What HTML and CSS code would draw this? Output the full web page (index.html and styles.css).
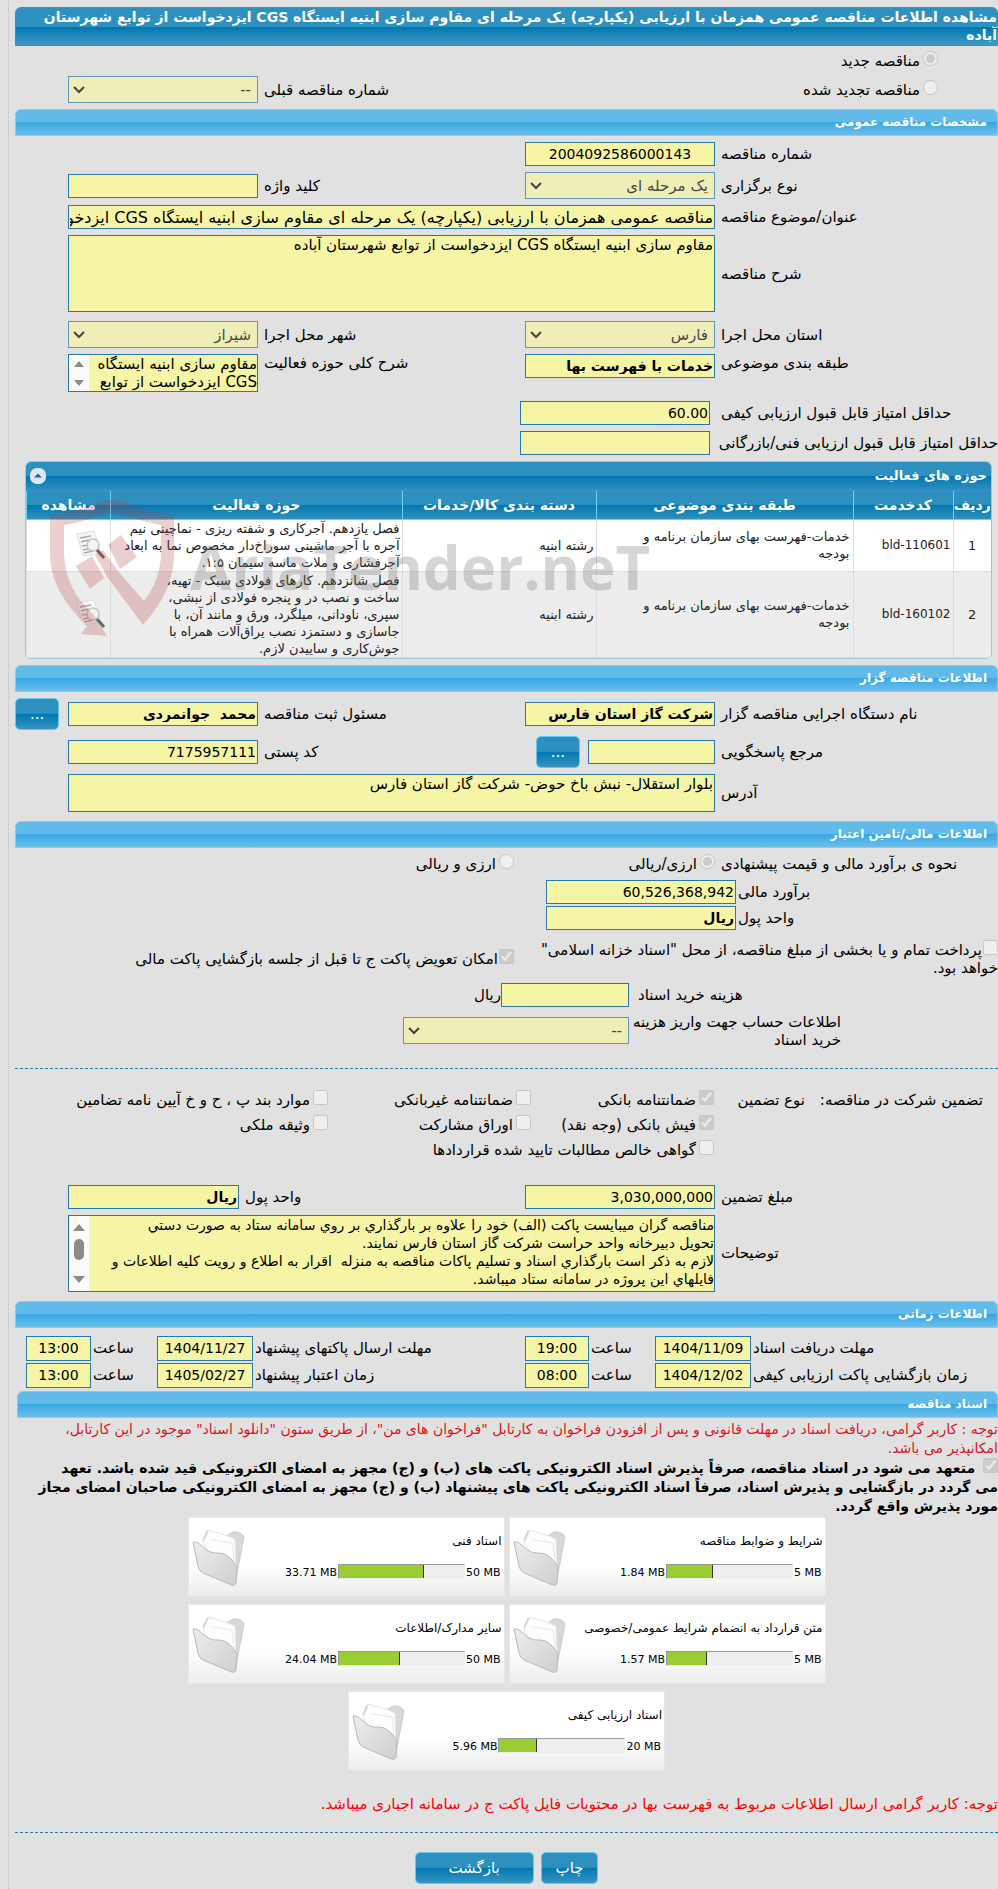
FILE: index.html
```html
<!DOCTYPE html>
<html lang="fa" dir="rtl">
<head>
    <meta charset="UTF-8">
    <meta name="viewport" content="width=device-width, initial-scale=1.0">
    <title>مشاهده اطلاعات مناقصه عمومی</title>
    <link rel="stylesheet" href="styles.css">
</head>
<body>
    <!-- shared icons -->
    <svg class="defs" width="0" height="0" aria-hidden="true">
        <defs>
            <linearGradient id="folder-front" x1="0" y1="0" x2="1" y2="1">
                <stop offset="0" stop-color="#ededed"/>
                <stop offset="1" stop-color="#cfcfcf"/>
            </linearGradient>
            <symbol id="folder" viewBox="0 0 54 60">
                <path d="M11 13 L15 4 L34 9 L41 5 Q49 4 52 10 L43 57 Q40 59 37 56 Z" fill="#d8d8d8" stroke="#cecece"/>
                <path d="M11 16 L17 3 L36 9 L43 12 L44 44 L30 46 Z" fill="#fdfdfd" stroke="#e6e6e6"/>
                <path d="M20 13 L40 16 L42 34" fill="none" stroke="#e8e8e8"/>
                <path d="M1 15 Q5 14 11 20 Q18 27 27 26 Q37 26 45 40 L44 56 Q43 60 37 57 L11 46 Q7 44 6 39 Z" fill="url(#folder-front)" stroke="#b9b9b9"/>
            </symbol>
            <symbol id="view" viewBox="0 0 30 30">
                <path d="M1 4 L18 1 L25 23 L7 26 Z" fill="#f6f6f6" stroke="#dedede"/>
                <path d="M4 8 l11 -2 M5 12 l8 -2 M6 16 l7 -1 M7 20 l9 -2 M8 23 l9 -2" stroke="#aaa" stroke-width="1.5"/>
                <circle cx="17" cy="15" r="6" fill="#f4f4f4" fill-opacity=".9" stroke="#c4c4c4" stroke-width="1.5"/>
                <path d="M21 20 L28 28" stroke="#666" stroke-width="3"/>
            </symbol>
        </defs>
    </svg>

    <div class="page">
        <h1 class="title">مشاهده اطلاعات مناقصه عمومی همزمان با ارزیابی (یکپارچه) یک مرحله ای مقاوم سازی ابنیه ایستگاه CGS ایزدخواست از توابع شهرستان آباده</h1>

        <div class="form">
            <div class="row kind-row">
                <label class="kind"><input type="radio" name="kind" checked disabled>مناقصه جدید</label>
            </div>
            <div class="row">
                <label class="kind"><input type="radio" name="kind" disabled>مناقصه تجدید شده</label>
                <span></span>
                <label class="lbl" for="prev">شماره مناقصه قبلی</label>
                <select id="prev" disabled><option>--</option></select>
            </div>
        </div>

        <h2 class="bar">مشخصات مناقصه عمومی</h2>
        <div class="form">
            <div class="row">
                <label class="lbl" for="num">شماره مناقصه</label>
                <input class="mid" type="text" id="num" value="2004092586000143" readonly>
            </div>
            <div class="row">
                <label class="lbl" for="type">نوع برگزاری</label>
                <select id="type" disabled><option>یک مرحله ای</option></select>
                <label class="lbl" for="keyword">کلید واژه</label>
                <input type="text" id="keyword" readonly>
            </div>
            <div class="row">
                <label class="lbl" for="subject">عنوان/موضوع مناقصه</label>
                <input class="wide subject" type="text" id="subject" value="مناقصه عمومی همزمان با ارزیابی (یکپارچه) یک مرحله ای مقاوم سازی ابنیه ایستگاه CGS ایزدخواست از توابع شهرستان آباده" readonly>
            </div>
            <div class="row">
                <label class="lbl" for="desc">شرح مناقصه</label>
                <textarea class="wide tall" id="desc" readonly>مقاوم سازی ابنیه ایستگاه CGS ایزدخواست از توابع شهرستان آباده</textarea>
            </div>
            <div class="row spaced">
                <label class="lbl" for="state">استان محل اجرا</label>
                <select id="state" disabled><option>فارس</option></select>
                <label class="lbl" for="city">شهر محل اجرا</label>
                <select id="city" disabled><option>شیراز</option></select>
            </div>
            <div class="row top">
                <label class="lbl" for="class">طبقه بندی موضوعی</label>
                <input class="strong" type="text" id="class" value="خدمات با فهرست بها" readonly>
                <label class="lbl" for="scope">شرح کلی حوزه فعالیت</label>
                <div class="scroll short">
                    <textarea id="scope" readonly>مقاوم سازی ابنیه ایستگاه CGS ایزدخواست از توابع</textarea>
                    <svg width="20" height="36" viewBox="0 0 20 36"><path d="M5 12 L10 6 L15 12 Z M5 25 L15 25 L10 31 Z" fill="#8b8b8b"/></svg>
                </div>
            </div>
            <div class="row score spaced">
                <label class="lbl" for="min1">حداقل امتیاز قابل قبول ارزیابی کیفی</label>
                <input type="text" id="min1" value="60.00" readonly>
            </div>
            <div class="row score">
                <label class="lbl" for="min2">حداقل امتیاز قابل قبول ارزیابی فنی/بازرگانی</label>
                <input type="text" id="min2" readonly>
            </div>
        </div>

        <div class="panel">
            <div class="panel-head">
                <h3>حوزه های فعالیت</h3>
                <button class="fold" type="button" aria-label="بستن">
                    <svg width="16" height="16" viewBox="0 0 16 16"><rect width="16" height="16" rx="7" fill="#dce8f5"/><path d="M4 9.5 L8 5.5 L12 9.5 Z" fill="#0f6ea3"/></svg>
                </button>
            </div>
            <table>
                <thead>
                    <tr>
                        <th class="c-row">ردیف</th>
                        <th class="c-code">کدخدمت</th>
                        <th class="c-class">طبقه بندی موضوعی</th>
                        <th class="c-group">دسته بندی کالا/خدمات</th>
                        <th>حوزه فعالیت</th>
                        <th class="c-view">مشاهده</th>
                    </tr>
                </thead>
                <tbody>
                    <tr>
                        <td class="num">1</td>
                        <td class="code">bld-110601</td>
                        <td class="class">خدمات-فهرست بهای سازمان برنامه و بودجه</td>
                        <td>رشته ابنیه</td>
                        <td>فصل یازدهم. آجرکاری و شفته ریزی - نماچینی نیم<br>آجره با آجر ماشینی سوراخ‌دار مخصوص نما به ابعاد<br>آجرفشاری و ملات ماسه سیمان ۱:۵.</td>
                        <td><svg class="view" width="30" height="30"><use href="#view"/></svg></td>
                    </tr>
                    <tr>
                        <td class="num">2</td>
                        <td class="code">bld-160102</td>
                        <td class="class">خدمات-فهرست بهای سازمان برنامه و بودجه</td>
                        <td>رشته ابنیه</td>
                        <td>فصل شانزدهم. کارهای فولادی سبک - تهیه،<br>ساخت و نصب در و پنجره فولادی از نبشی،<br>سپری، ناودانی، میلگرد، ورق و مانند آن، با<br>جاسازی و دستمزد نصب یراق‌آلات همراه با<br>جوش‌کاری و ساییدن لازم.</td>
                        <td><svg class="view" width="30" height="30"><use href="#view"/></svg></td>
                    </tr>
                </tbody>
            </table>
            <div class="watermark" dir="ltr">
                <svg width="128" height="140" viewBox="48 498 128 140" fill="#b43a3f" fill-opacity=".25">
                    <path fill-rule="evenodd" d="M50 516 Q82 512 97 504 Q112 497 128 504 Q144 512 174 516 L174 555 Q174 592 143 626 L108 579 L95 556 L103 551 L118 572 L144 602 Q161 580 161 553 L161 526 Q140 522 127 517 Q112 512 97 517 Q84 523 64 526 L64 555 Q66 592 94 616 L107 637 L81 635 L87 627 Q50 592 50 555 Z"/>
                    <path d="M76 567 L92 557 L104 579 L90 590 Z M108 546 L121 536 L137 558 L120 570 Z"/>
                </svg>
                <span>AriaTender.neT</span>
            </div>
        </div>

        <h2 class="bar">اطلاعات مناقصه گزار</h2>
        <div class="form">
            <div class="row">
                <label class="lbl" for="org">نام دستگاه اجرایی مناقصه گزار</label>
                <input class="strong" type="text" id="org" value="شرکت گاز استان فارس" readonly>
                <label class="lbl" for="person">مسئول ثبت مناقصه</label>
                <input class="strong" type="text" id="person" value="محمد  جوانمردی" readonly>
                <button class="btn more" type="button">...</button>
            </div>
            <div class="row">
                <label class="lbl" for="ref">مرجع پاسخگویی</label>
                <div class="pair">
                    <input type="text" id="ref" readonly>
                    <button class="btn" type="button">...</button>
                </div>
                <label class="lbl" for="zip">کد پستی</label>
                <input type="text" id="zip" value="7175957111" readonly>
            </div>
            <div class="row">
                <label class="lbl" for="addr">آدرس</label>
                <textarea class="wide" id="addr" readonly>بلوار استقلال- نبش باخ حوض- شرکت گاز استان فارس</textarea>
            </div>
        </div>

        <h2 class="bar spaced">اطلاعات مالی/تامین اعتبار</h2>
        <div class="form">
            <div class="row currency">
                <span class="lbl">نحوه ی برآورد مالی و قیمت پیشنهادی</span>
                <label><input type="radio" name="cur" checked disabled>ارزی/ریالی</label>
                <label><input type="radio" name="cur" disabled>ارزی و ریالی</label>
            </div>
            <div class="tight">
                <div class="row money">
                    <label class="lbl" for="est">برآورد مالی</label>
                    <input type="text" id="est" value="60,526,368,942" readonly>
                </div>
                <div class="row money">
                    <label class="lbl" for="unit1">واحد پول</label>
                    <input class="strong" type="text" id="unit1" value="ریال" readonly>
                </div>
            </div>
            <div class="options">
                <label><input type="checkbox" disabled>پرداخت تمام و یا بخشی از مبلغ مناقصه، از محل "اسناد خزانه اسلامی" خواهد بود.</label>
                <label><input type="checkbox" checked disabled>امکان تعویض پاکت ج تا قبل از جلسه بازگشایی پاکت مالی</label>
            </div>
            <div class="row buy">
                <label class="lbl" for="cost">هزینه خرید اسناد</label>
                <input type="text" id="cost" readonly>
                <span>ریال</span>
            </div>
            <div class="row buy account">
                <label class="lbl" for="acc">اطلاعات حساب جهت واریز هزینه<br>خرید اسناد</label>
                <select id="acc" disabled><option>--</option></select>
            </div>
        </div>

        <hr>

        <fieldset class="bonds">
            <legend>تضمین شرکت در مناقصه:</legend>
            <span class="kinds">نوع تضمین</span>
            <div class="checks">
                <label><input type="checkbox" checked disabled>ضمانتنامه بانکی</label>
                <label><input type="checkbox" disabled>ضمانتنامه غیربانکی</label>
                <label><input type="checkbox" disabled>موارد بند پ ، ح و خ آیین نامه تضامین</label>
                <label><input type="checkbox" checked disabled>فیش بانکی (وجه نقد)</label>
                <label><input type="checkbox" disabled>اوراق مشارکت</label>
                <label><input type="checkbox" disabled>وثیقه ملکی</label>
                <label class="all"><input type="checkbox" disabled>گواهی خالص مطالبات تایید شده قراردادها</label>
            </div>
        </fieldset>

        <div class="form">
            <div class="row unit">
                <label class="lbl" for="bond">مبلغ تضمین</label>
                <input type="text" id="bond" value="3,030,000,000" readonly>
                <label class="lbl" for="unit2">واحد پول</label>
                <input class="strong" type="text" id="unit2" value="ریال" readonly>
            </div>
            <div class="row">
                <label class="lbl" for="notes">توضیحات</label>
                <div class="scroll wide">
                    <textarea class="notes" id="notes" readonly>مناقصه گران ميبايست پاکت (الف) خود را علاوه بر بارگذاري بر روي سامانه ستاد به صورت دستي
تحويل دبيرخانه واحد حراست شرکت گاز استان فارس نمايند.
لازم به ذکر است بارگذاري اسناد و تسليم پاکات مناقصه به منزله  اقرار به اطلاع و رويت کليه اطلاعات و
فايلهاي اين پروژه در سامانه ستاد ميباشد.</textarea>
                    <svg width="20" height="75" viewBox="0 0 20 75"><path d="M4 15 L10 8 L16 15 Z M4 60 L16 60 L10 67 Z" fill="#8b8b8b"/><rect x="5" y="23" width="10" height="21" rx="5" fill="#8b8b8b"/></svg>
                </div>
            </div>
        </div>

        <h2 class="bar spaced">اطلاعات زمانی</h2>
        <div class="times">
            <label for="d1">مهلت دریافت اسناد</label>
            <input type="text" id="d1" value="1404/11/09" readonly>
            <label for="t1">ساعت</label>
            <input type="text" id="t1" value="19:00" readonly>
            <label for="d2">مهلت ارسال پاکتهای پیشنهاد</label>
            <input type="text" id="d2" value="1404/11/27" readonly>
            <label for="t2">ساعت</label>
            <input type="text" id="t2" value="13:00" readonly>
            <label for="d3">زمان بازگشایی پاکت ارزیابی کیفی</label>
            <input type="text" id="d3" value="1404/12/02" readonly>
            <label for="t3">ساعت</label>
            <input type="text" id="t3" value="08:00" readonly>
            <label for="d4">زمان اعتبار پیشنهاد</label>
            <input type="text" id="d4" value="1405/02/27" readonly>
            <label for="t4">ساعت</label>
            <input type="text" id="t4" value="13:00" readonly>
        </div>

        <h2 class="bar docs-bar">اسناد مناقصه</h2>
        <p class="warn">توجه : کاربر گرامی، دریافت اسناد در مهلت قانونی و پس از افزودن فراخوان به کارتابل "فراخوان های من"، از طریق ستون "دانلود اسناد" موجود در این کارتابل،<br>امکانپذیر می باشد.</p>
        <label class="pledge"><input type="checkbox" checked disabled> متعهد می شود در اسناد مناقصه، صرفاً پذیرش اسناد الکترونیکی پاکت های (ب) و (ج) مجهز به امضای الکترونیکی قید شده باشد. تعهد<br>می گردد در بازگشایی و پذیرش اسناد، صرفاً اسناد الکترونیکی پاکت های پیشنهاد (ب) و (ج) مجهز به امضای الکترونیکی صاحبان امضای مجاز<br>مورد پذیرش واقع گردد.</label>

        <div class="cards">
            <div class="card">
                <p>شرایط و ضوابط مناقصه</p>
                <div class="size"><span>5 MB</span><div class="meter"><i style="width: 37%"></i></div><span>1.84 MB</span></div>
                <svg class="folder" width="54" height="60"><use href="#folder"/></svg>
            </div>
            <div class="card">
                <p>اسناد فنی</p>
                <div class="size"><span>50 MB</span><div class="meter"><i style="width: 68%"></i></div><span>33.71 MB</span></div>
                <svg class="folder" width="54" height="60"><use href="#folder"/></svg>
            </div>
            <div class="card">
                <p>متن قرارداد به انضمام شرایط عمومی/خصوصی</p>
                <div class="size"><span>5 MB</span><div class="meter"><i style="width: 32%"></i></div><span>1.57 MB</span></div>
                <svg class="folder" width="54" height="60"><use href="#folder"/></svg>
            </div>
            <div class="card">
                <p>سایر مدارک/اطلاعات</p>
                <div class="size"><span>50 MB</span><div class="meter"><i style="width: 49%"></i></div><span>24.04 MB</span></div>
                <svg class="folder" width="54" height="60"><use href="#folder"/></svg>
            </div>
            <div class="card">
                <p>اسناد ارزیابی کیفی</p>
                <div class="size"><span>20 MB</span><div class="meter"><i style="width: 30%"></i></div><span>5.96 MB</span></div>
                <svg class="folder" width="54" height="60"><use href="#folder"/></svg>
            </div>
        </div>

        <p class="note">توجه: کاربر گرامی ارسال اطلاعات مربوط به فهرست بها در محتویات فایل پاکت ج در سامانه اجباری میباشد.</p>

        <hr>

        <div class="actions">
            <button class="btn" type="button">چاپ</button>
            <button class="btn back" type="button">بازگشت</button>
        </div>
    </div>
</body>
</html>
```
FILE: styles.css
```css
* {
    box-sizing: border-box;
}
body {
    margin: 0;
    background-color: #e1e1e1;
    font-family: Tahoma, "DejaVu Sans", sans-serif;
    font-size: 15px;
    line-height: 18px;
    color: #000;
}
.defs {
    position: absolute;
}
.page {
    margin-left: 8px;
    padding: 7px 0 5px 6px;
    border-left: 1px dotted #bbb;
}
h1, h2, h3, p {
    margin: 0;
}
.title {
    padding: 0 0 1px 8px;
    font-size: 14px;
    line-height: 18px;
    color: #fff;
    border: 1px solid #2f8fd0;
    border-radius: 6px 6px 0 0;
    background: linear-gradient(#2e90bf 0, #2e90bf 50%, #0077b0 52%, #3f9ac6 100%);
}
.bar {
    height: 27px;
    margin: 6px 0;
    padding: 0 10px;
    font-size: 12px;
    line-height: 25px;
    color: #fff;
    border: 1px solid #7ad0f5;
    border-radius: 6px 6px 0 0;
    background: linear-gradient(#62bae9 0, #62bae9 48%, #38a8e3 50%, #6bbfeb 100%);
}
.spaced {
    margin-top: 9px;
}
.form {
    display: flex;
    flex-direction: column;
    gap: 6px;
}
.form .spaced {
    margin-top: 3px;
}
.row {
    display: grid;
    grid-template-columns: 283px 190px 1fr 190px 53px;
    align-items: center;
}
.top {
    align-items: start;
}
.lbl {
    padding-left: 6px;
    text-align: left;
}
.kind {
    padding-right: 60px;
}
.kind-row {
    height: 24px;
    align-items: end;
}

/* fields */
input[type="text"], textarea, select {
    width: 100%;
    margin: 0;
    padding: 0 1px;
    font-family: inherit;
    color: #000;
    border: 1px solid #2878ad;
    border-radius: 0;
    background-color: #f6f4a5;
    outline: none;
}
input[type="text"] {
    height: 24px;
    font-size: 14px;
}
input.mid {
    text-align: center;
}
input[type="text"].subject {
    font-size: 16px;
}
input.strong {
    font-weight: bold;
}
textarea {
    display: block;
    height: 38px;
    font-size: 15px;
    line-height: 18px;
    resize: none;
    overflow: hidden;
}
textarea.tall {
    height: 77px;
}
select {
    height: 27px;
    padding: 0 6px;
    font-size: 15px;
    appearance: none;
    background: #f6f4a5 url("data:image/svg+xml,%3Csvg xmlns='http://www.w3.org/2000/svg' width='12' height='8'%3E%3Cpath d='M1 1l5 5 5-5' fill='none' stroke='%23000' stroke-width='2'/%3E%3C/svg%3E") no-repeat 4px center;
}
select:disabled {
    opacity: .7;
}
input[type="radio"], input[type="checkbox"] {
    width: 15px;
    height: 15px;
    margin: 0 0 0 3px;
    vertical-align: 0;
}
.wide {
    grid-column: 2 / 5;
}
.scroll {
    display: flex;
    border: 1px solid #2878ad;
    background-color: #fcfcfc;
}
.scroll textarea {
    flex: 1;
    width: auto;
    height: 75px;
    padding: 0;
    border: 0;
}
.scroll.short textarea {
    height: 36px;
}
.scroll .notes {
    font-size: 14px;
}
.score {
    grid-template-columns: 283px 195px;
}
.score input {
    width: 190px;
    margin-right: 5px;
}
.score .lbl {
    white-space: nowrap;
}

/* services table */
.panel {
    position: relative;
    margin: 6px 6px 6px 10px;
    border: 1px solid #9cc7e0;
    border-radius: 6px;
    background-color: #fff;
    overflow: hidden;
}
.panel-head {
    display: flex;
    justify-content: space-between;
    align-items: center;
    height: 29px;
    padding: 0 4px;
    color: #fff;
    border-bottom: 1px solid #3d8fd6;
    background: linear-gradient(#2e90bf 0, #2e90bf 48%, #0077b0 50%, #2e90bf 100%);
}
.panel-head h3 {
    font-size: 13px;
}
.fold {
    width: 16px;
    height: 16px;
    padding: 0;
    border: 0;
    background: none;
}
.fold svg {
    display: block;
}
table {
    width: 100%;
    border-collapse: collapse;
    table-layout: fixed;
}
th {
    height: 28px;
    padding: 0;
    font-size: 14px;
    color: #fff;
    border-left: 1px solid #6fd0f5;
    border-bottom: 1px solid #6fd0f5;
    background: linear-gradient(#2e90bf 0, #2e90bf 48%, #0077b0 50%, #2e90bf 100%);
}
.c-row {
    width: 38px;
}
.c-code {
    width: 100px;
}
.c-class {
    width: 257px;
}
.c-group {
    width: 194px;
}
.c-view {
    width: 84px;
}
td {
    padding: 0 2px;
    font-size: 13px;
    line-height: 17px;
    color: #222;
    border-left: 1px solid #ddd;
    border-bottom: 1px solid #ddd;
}
tbody tr:nth-child(even) {
    background-color: #ededed;
}
.num {
    text-align: center;
}
.code {
    font-size: 12px;
}
.class {
    padding: 0 3px 0 24px;
}
.view {
    display: block;
    margin-right: 2px;
}
.watermark {
    position: absolute;
    left: 22px;
    top: 35px;
    display: flex;
    align-items: center;
    gap: 14px;
    font-family: "Open Sans", sans-serif;
    font-size: 60px;
    font-weight: bold;
    line-height: 80px;
    color: rgba(120, 120, 120, .3);
    pointer-events: none;
}

/* buttons */
.btn {
    height: 32px;
    padding: 0 14px;
    font-family: inherit;
    font-size: 15px;
    color: #fff;
    border: 1px solid #62c8f2;
    border-radius: 5px;
    background: linear-gradient(#2e90bf 0, #2e90bf 48%, #0077b0 50%, #3795c2 100%);
}
.more {
    justify-self: end;
}
.pair {
    display: flex;
    align-items: center;
    gap: 8px;
}
.pair input[type="text"] {
    width: 127px;
}

/* finance */
.currency {
    grid-template-columns: 283px 201px 1fr;
    height: 20px;
}
.tight {
    display: flex;
    flex-direction: column;
    gap: 2px;
}
.money {
    grid-template-columns: 262px 190px;
}
.money .lbl {
    padding-left: 2px;
}
.options {
    display: grid;
    grid-template-columns: 484px 1fr;
    align-items: center;
    padding: 4px 0 0;
}
.options input[type="checkbox"] {
    margin-left: 1px;
}
.buy {
    grid-template-columns: 369px 128px auto;
    justify-content: start;
}
.buy .lbl {
    padding-left: 9px;
}
.account {
    grid-template-columns: 369px 226px;
}
.account .lbl {
    padding-right: 157px;
    padding-left: 0;
    text-align: right;
    white-space: nowrap;
}
hr {
    margin: 19px 0;
    border: 0;
    border-top: 1px dashed #2878ad;
}
.bonds {
    display: flex;
    min-width: 0;
    margin: 0 0 22px;
    padding: 0 15px 0 0;
    border: 0;
    line-height: 25px;
}
.bonds legend {
    float: right;
    width: 178px;
    padding: 0;
}
.kinds {
    width: 91px;
}
.checks {
    flex: 1;
    display: grid;
    grid-template-columns: 183px 203px 1fr;
}
.checks .all {
    grid-column: 1 / 4;
}
.unit {
    grid-template-columns: 283px 190px 1fr 171px 53px;
}

/* dates */
.times {
    display: grid;
    grid-template-columns: 247px 96px 66px 64px 1fr 96px 66px 65px;
    row-gap: 2px;
    align-items: center;
    margin: 8px 0 3px;
    padding-left: 11px;
}
.times label {
    padding-left: 2px;
    text-align: left;
}
.times input[type="text"] {
    height: 25px;
    padding: 0;
    text-align: center;
}

/* documents */
.docs-bar {
    margin: 3px 0 2px 2px;
}
.warn, .pledge {
    font-size: 14px;
    line-height: 19px;
}
.warn {
    color: #d9141c;
}
.pledge {
    display: block;
    font-weight: bold;
}
.cards {
    display: flex;
    flex-wrap: wrap;
    justify-content: center;
    gap: 7px 4px;
    max-width: 640px;
    margin: 1px auto 0;
}
.card {
    display: grid;
    grid-template-columns: 1fr 56px;
    grid-template-rows: 46px 1fr;
    width: 317px;
    height: 80px;
    padding: 0 2px 0 0;
    font-size: 12px;
    border: 1px solid #e8e8e8;
    background: linear-gradient(#fff 60%, #ececec);
}
.card p {
    align-self: center;
}
.folder {
    grid-column: 2;
    grid-row: 1 / 3;
    align-self: center;
    justify-self: end;
    margin-left: 3px;
}
.size {
    display: flex;
    gap: 1px;
    padding-right: 1px;
    font-size: 11px;
}
.size span {
    direction: ltr;
}
.meter {
    width: 127px;
    height: 15px;
    direction: ltr;
    border: 1px solid #eee;
    border-top-color: #999;
    border-left-color: #999;
    background-color: #eee;
}
.meter i {
    display: block;
    height: 13px;
    border-right: 1px solid #333;
    background-color: #9acd32;
}
.note {
    margin-top: 24px;
    color: #f00;
}
.actions {
    display: flex;
    justify-content: center;
    gap: 7px;
}
.back {
    width: 119px;
}
```
